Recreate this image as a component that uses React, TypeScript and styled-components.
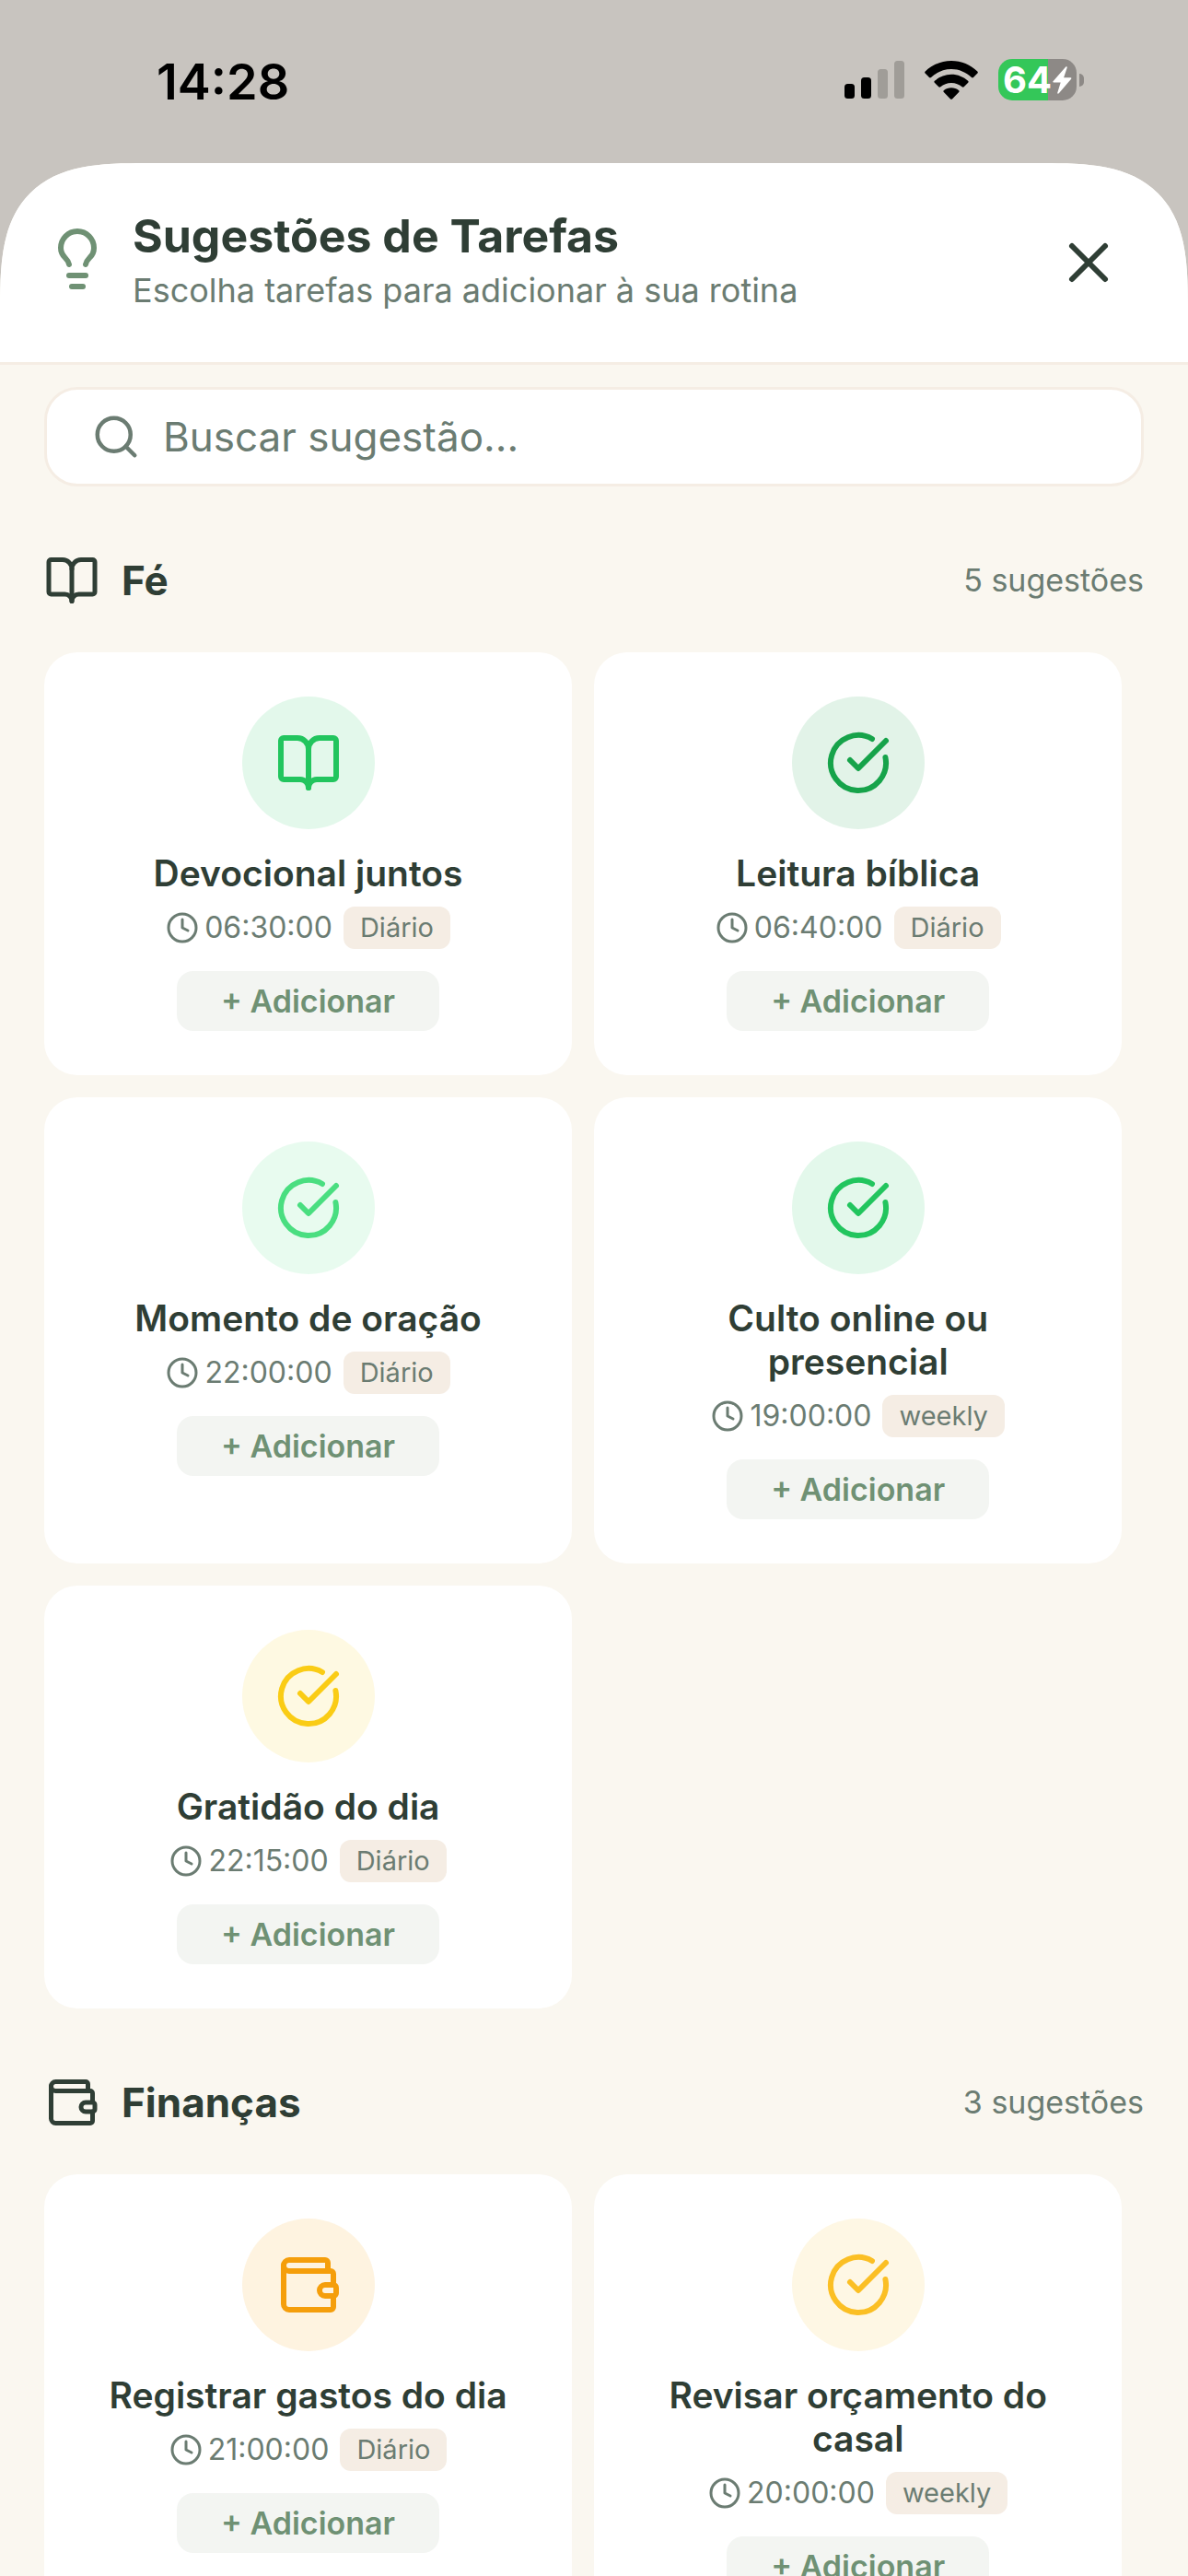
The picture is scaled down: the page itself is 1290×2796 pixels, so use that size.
import React from "react";
import styled, { createGlobalStyle } from "styled-components";
import {
  BookOpen,
  CircleCheckBig,
  Clock,
  Lightbulb,
  Search,
  Wallet,
  X,
  type LucideIcon,
} from "lucide-react";

const color = {
  backdrop: "#c8c4bf",
  page: "#faf7f0",
  surface: "#ffffff",
  line: "#f5ede4",
  text: "#2f3e35",
  muted: "#6b7c72",
  primary: "#6f9174",
  primarySoft: "#f3f5f2",
};

const GlobalStyle = createGlobalStyle`
  *, *::before, *::after { box-sizing: border-box; }
  body {
    margin: 0;
    background: ${color.backdrop};
    color: ${color.text};
    font-family: Inter, "Liberation Sans", sans-serif;
  }
  h1, h2, h3, p, ul { margin: 0; padding: 0; }
  button, input { font-family: inherit; }
  svg { display: block; flex: none; }
`;

const Screen = styled.div`
  display: flex;
  flex-direction: column;
  height: 100vh;
  overflow: hidden;
`;

const StatusBar = styled.div`
  display: flex;
  flex: none;
  align-items: center;
  justify-content: space-between;
  height: 177px;
  padding: 0 113px 0 170px;
  color: #000;
`;

const StatusTime = styled.time`
  font-size: 54px;
  font-weight: 600;
  line-height: 60px;
`;

const StatusIcons = styled.div`
  display: flex;
  align-items: center;
  gap: 22px;
  padding-bottom: 4px;
`;

const Battery = styled.div`
  display: flex;
  align-items: center;
  gap: 3px;
`;

const BatteryBody = styled.div<{ $level: number }>`
  display: flex;
  align-items: center;
  justify-content: center;
  gap: 1px;
  width: 85px;
  height: 45px;
  border-radius: 15px;
  color: #fff;
  font-size: 40px;
  font-weight: 700;
  line-height: 45px;
  background: linear-gradient(
    to right,
    #34c759 ${(p) => p.$level}%,
    #8d8986 ${(p) => p.$level}%
  );
`;

const BatteryTip = styled.div`
  width: 5px;
  height: 14px;
  border-radius: 0 7px 7px 0;
  background: #8d8986;
`;

const Sheet = styled.main`
  display: flex;
  flex: 1;
  flex-direction: column;
  min-height: 0;
  overflow: hidden;
  border-radius: 114px 114px 0 0;
  background: ${color.page};

  @supports (corner-shape: superellipse(1.6)) {
    border-radius: 160px 160px 0 0;
    corner-shape: superellipse(1.6);
  }
`;

const Header = styled.header`
  display: flex;
  flex: none;
  align-items: flex-start;
  justify-content: space-between;
  padding: 48px;
  border-bottom: 3px solid ${color.line};
  background: ${color.surface};
`;

const HeaderIntro = styled.div`
  display: flex;
  align-items: center;
  gap: 24px;
`;

const Title = styled.h1`
  font-size: 50px;
  font-weight: 700;
  line-height: 62px;
`;

const Subtitle = styled.p`
  margin-top: 6px;
  color: ${color.muted};
  font-size: 36px;
  line-height: 44px;
`;

const CloseButton = styled.button`
  display: flex;
  padding: 24px;
  border: 0;
  background: none;
  color: ${color.text};
`;

const Content = styled.div`
  flex: 1;
  min-height: 0;
  overflow: auto;
  padding: 24px 48px;
  scrollbar-width: none;
`;

const SearchField = styled.label`
  display: flex;
  align-items: center;
  gap: 24px;
  height: 108px;
  padding: 0 48px;
  border: 3px solid ${color.line};
  border-radius: 36px;
  background: ${color.surface};
  color: ${color.muted};
`;

const SearchInput = styled.input`
  flex: 1;
  min-width: 0;
  padding: 0;
  border: 0;
  outline: 0;
  background: none;
  color: ${color.text};
  font-size: 44px;
  line-height: 54px;

  &::placeholder {
    color: ${color.muted};
    opacity: 1;
  }
`;

const Section = styled.section`
  margin-top: 72px;
`;

const SectionHeader = styled.div`
  display: flex;
  align-items: center;
  gap: 24px;
  height: 60px;
  margin-bottom: 48px;
`;

const SectionTitle = styled.h2`
  flex: 1;
  font-size: 44px;
  font-weight: 700;
  line-height: 60px;
`;

const SectionCount = styled.span`
  color: ${color.muted};
  font-size: 34px;
  line-height: 42px;
`;

const CardGrid = styled.ul`
  display: grid;
  grid-template-columns: repeat(2, 48%);
  gap: 24px;
  list-style: none;
`;

const Card = styled.li`
  display: flex;
  flex-direction: column;
  align-items: center;
  padding: 48px;
  border-radius: 36px;
  background: ${color.surface};
`;

const IconCircle = styled.div<{ $tint: string }>`
  display: flex;
  align-items: center;
  justify-content: center;
  width: 144px;
  height: 144px;
  border-radius: 50%;
  background: ${(p) => p.$tint}20;
  color: ${(p) => p.$tint};
`;

const CardTitle = styled.h3`
  margin: 24px 0 12px;
  font-size: 39px;
  font-weight: 600;
  line-height: 47px;
  text-align: center;
`;

const Meta = styled.div`
  display: flex;
  align-items: center;
  height: 47px;
  color: ${color.muted};
`;

const MetaTime = styled.time`
  margin: 0 12px 0 6px;
  font-size: 32px;
  line-height: 36px;
`;

const Frequency = styled.span`
  padding: 0 18px;
  border-radius: 12px;
  background: ${color.line};
  font-size: 29px;
  line-height: 46px;
`;

const AddButton = styled.button`
  margin-top: 24px;
  padding: 12px 48px;
  border: 0;
  border-radius: 18px;
  background: ${color.primarySoft};
  color: ${color.primary};
  font-size: 34px;
  font-weight: 600;
  line-height: 41px;
`;

type Suggestion = {
  title: string;
  time: string;
  frequency: string;
  tint: string;
  icon: LucideIcon;
};

type Group = {
  name: string;
  icon: LucideIcon;
  total: number;
  items: Suggestion[];
};

const groups: Group[] = [
  {
    name: "Fé",
    icon: BookOpen,
    total: 5,
    items: [
      { title: "Devocional juntos", time: "06:30:00", frequency: "Diário", tint: "#22c55e", icon: BookOpen },
      { title: "Leitura bíblica", time: "06:40:00", frequency: "Diário", tint: "#16a34a", icon: CircleCheckBig },
      { title: "Momento de oração", time: "22:00:00", frequency: "Diário", tint: "#4ade80", icon: CircleCheckBig },
      { title: "Culto online ou presencial", time: "19:00:00", frequency: "weekly", tint: "#22c55e", icon: CircleCheckBig },
      { title: "Gratidão do dia", time: "22:15:00", frequency: "Diário", tint: "#facc15", icon: CircleCheckBig },
    ],
  },
  {
    name: "Finanças",
    icon: Wallet,
    total: 3,
    items: [
      { title: "Registrar gastos do dia", time: "21:00:00", frequency: "Diário", tint: "#f59e0b", icon: Wallet },
      { title: "Revisar orçamento do casal", time: "20:00:00", frequency: "weekly", tint: "#fbbf24", icon: CircleCheckBig },
    ],
  },
];

function SignalIcon() {
  return (
    <svg width="65" height="41" viewBox="0 0 65 41" aria-hidden="true">
      <rect x="0" y="25" width="11" height="16" rx="3.5" />
      <rect x="18" y="18" width="11" height="23" rx="3.5" />
      <rect x="36" y="9" width="11" height="32" rx="3.5" fill="#a09d98" />
      <rect x="54" y="0" width="11" height="41" rx="3.5" fill="#a09d98" />
    </svg>
  );
}

function WifiIcon() {
  return (
    <svg width="58" height="42" viewBox="0 0 58 42" aria-hidden="true">
      <path d="M29 0C40 0 50 4.400 57.300 11.500C58 12.200 58 13 57.400 13.600L53 18C52.400 18.600 51.600 18.600 51 18C45 12.400 37.300 9 29 9S13 12.400 7 18C6.400 18.600 5.600 18.600 5 18L.6 13.600C0 13 0 12.200.7 11.500C8 4.400 18 0 29 0Z" />
      <path d="M29 14.800C36 14.800 42.300 17.500 47.100 21.800C47.800 22.400 47.800 23.200 47.200 23.800L42.700 28.200C42.100 28.800 41.400 28.800 40.700 28.200C37.600 25.500 33.500 23.900 29 23.900S20.400 25.500 17.300 28.200C16.600 28.800 15.900 28.800 15.300 28.200L10.800 23.800C10.200 23.200 10.200 22.400 10.900 21.800C15.700 17.500 22 14.800 29 14.800Z" />
      <path d="M29 29.300C32 29.300 34.800 30.300 37 32C37.800 32.600 37.800 33.400 37.200 34L30.200 41.200C29.500 42 28.500 42 27.800 41.200L20.800 34C20.200 33.400 20.200 32.600 21 32C23.200 30.300 26 29.300 29 29.300Z" />
    </svg>
  );
}

function BoltIcon() {
  return (
    <svg width="21" height="30" viewBox="0 0 21 30" fill="#fff" aria-hidden="true">
      <path d="M14.300.6L.5 16.200C0 16.900.3 17.500 1.100 17.500H8.700L5.300 28.400C4.900 29.700 6 30 6.800 29.200L20.100 13.700C20.700 13 20.400 12.300 19.500 12.300H12.100L15.700 1.500C16.100.2 15.100-.3 14.300.6Z" />
    </svg>
  );
}

function SuggestionCard({ item }: { item: Suggestion }) {
  const Icon = item.icon;
  return (
    <Card>
      <IconCircle $tint={item.tint}>
        <Icon size={72} />
      </IconCircle>
      <CardTitle>{item.title}</CardTitle>
      <Meta>
        <Clock size={36} />
        <MetaTime>{item.time}</MetaTime>
        <Frequency>{item.frequency}</Frequency>
      </Meta>
      <AddButton type="button">+ Adicionar</AddButton>
    </Card>
  );
}

export default function App() {
  return (
    <Screen>
      <GlobalStyle />
      <StatusBar>
        <StatusTime>14:28</StatusTime>
        <StatusIcons>
          <SignalIcon />
          <WifiIcon />
          <Battery>
            <BatteryBody $level={64}>
              64
              <BoltIcon />
            </BatteryBody>
            <BatteryTip />
          </Battery>
        </StatusIcons>
      </StatusBar>
      <Sheet>
        <Header>
          <HeaderIntro>
            <Lightbulb size={72} color={color.primary} />
            <div>
              <Title>Sugestões de Tarefas</Title>
              <Subtitle>Escolha tarefas para adicionar à sua rotina</Subtitle>
            </div>
          </HeaderIntro>
          <CloseButton type="button" aria-label="Fechar">
            <X size={72} />
          </CloseButton>
        </Header>
        <Content>
          <SearchField>
            <Search size={54} />
            <SearchInput type="text" aria-label="Buscar sugestão" placeholder="Buscar sugestão..." />
          </SearchField>
          {groups.map((group) => (
            <Section key={group.name}>
              <SectionHeader>
                <group.icon size={60} />
                <SectionTitle>{group.name}</SectionTitle>
                <SectionCount>{group.total} sugestões</SectionCount>
              </SectionHeader>
              <CardGrid>
                {group.items.map((item) => (
                  <SuggestionCard key={item.title} item={item} />
                ))}
              </CardGrid>
            </Section>
          ))}
        </Content>
      </Sheet>
    </Screen>
  );
}
